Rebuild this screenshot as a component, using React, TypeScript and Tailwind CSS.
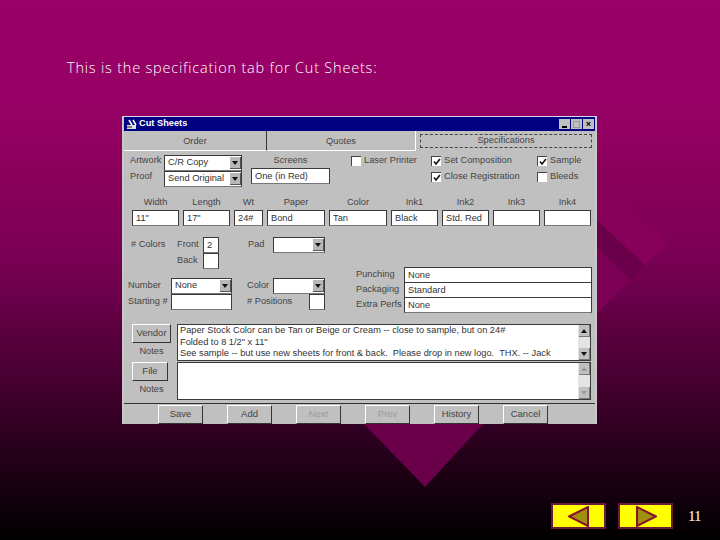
const FONT = "font-['Liberation_Sans',Arial,sans-serif]";

function Field({ className, value }: { className: string; value?: string }) {
  return (
    <div
      className={`h-[16px] shrink-0 overflow-hidden whitespace-nowrap border border-[#3a3a3a] border-b-[#777] bg-white pl-[3px] leading-[14px] text-[#333] ${className}`}
    >
      {value}
    </div>
  );
}

function Combo({ className, value }: { className: string; value?: string }) {
  return (
    <div className={`flex h-[16px] shrink-0 items-center border border-[#3a3a3a] border-b-[#777] bg-white ${className}`}>
      <span className="flex-1 overflow-hidden whitespace-nowrap pl-[3px] text-[#333]">{value}</span>
      <span className="flex h-[12px] w-[11px] items-center justify-center border-r border-b border-[#555] bg-[#b8b8b8]">
        <svg width="6" height="4" viewBox="0 0 6 4">
          <path d="M0 0h6L3 4z" fill="#111" />
        </svg>
      </span>
    </div>
  );
}

function Check({ checked, label, className }: { checked?: boolean; label: string; className: string }) {
  return (
    <div className={`flex items-center gap-[3px] ${className}`}>
      <span className="flex h-[10px] w-[10px] shrink-0 items-center justify-center border-t border-l border-[#444] bg-white">
        {checked && (
          <svg width="8" height="8" viewBox="0 0 8 8">
            <path d="M1 3.5l2 2.5 4-5" fill="none" stroke="#111" strokeWidth="1.6" />
          </svg>
        )}
      </span>
      <span className="whitespace-nowrap text-[#444]">{label}</span>
    </div>
  );
}

function Btn({ label, className, disabled }: { label: string; className: string; disabled?: boolean }) {
  return (
    <div
      className={`flex h-[19px] shrink-0 items-center justify-center border border-t-white border-l-white border-r-[#333] border-b-[#333] bg-[#c0c0c0] text-[9.5px] ${
        disabled ? "text-[#9a9a9a]" : "text-[#444]"
      } ${className}`}
    >
      {label}
    </div>
  );
}

function ScrollBtn({ up, dim }: { up?: boolean; dim?: boolean }) {
  return (
    <span className="flex h-[12px] w-[11px] items-center justify-center border-r border-b border-[#777] bg-[#c0c0c0]">
      <svg width="6" height="4" viewBox="0 0 6 4">
        <path d={up ? "M0 4h6L3 0z" : "M0 0h6L3 4z"} fill={dim ? "#999" : "#111"} />
      </svg>
    </span>
  );
}

function Memo({ lines, dim, className }: { lines?: string[]; dim?: boolean; className: string }) {
  return (
    <div className={`flex border border-[#3a3a3a] bg-white ${className}`}>
      <div className="flex-1 overflow-hidden whitespace-nowrap pl-[2px] leading-[11.5px] text-[#333]">
        {lines?.map((l) => (
          <div key={l} className="whitespace-pre">
            {l}
          </div>
        ))}
      </div>
      <div className="flex w-[12px] flex-col justify-between bg-[#e4e4e4] pl-px">
        <ScrollBtn up dim={dim} />
        <ScrollBtn dim={dim} />
      </div>
    </div>
  );
}

function Label({ children, className }: { children: string; className: string }) {
  return <span className={`shrink-0 whitespace-nowrap text-[#444] ${className}`}>{children}</span>;
}

const DIMS = [
  { label: "Width", value: '11"', w: "w-[47px]" },
  { label: "Length", value: '17"', w: "w-[47px]" },
  { label: "Wt", value: "24#", w: "w-[29px]" },
  { label: "Paper", value: "Bond", w: "w-[58px]" },
  { label: "Color", value: "Tan", w: "w-[58px]" },
  { label: "Ink1", value: "Black", w: "w-[47px]" },
  { label: "Ink2", value: "Std. Red", w: "w-[47px]" },
  { label: "Ink3", value: "", w: "w-[47px]" },
  { label: "Ink4", value: "", w: "w-[47px]" },
];

function CutSheets() {
  return (
    <div className={`ml-[122px] mt-[38px] flex h-[308px] w-[475px] flex-col border-[2px] border-t border-b border-t-[#d8d8e8] border-l-[#c8c8c8] border-r-[#c8c8c8] border-b-[#c0c0c0] bg-[#c0c0c0] text-[9.25px] ${FONT}`}>
      {/* title bar */}
      <div className="flex h-[14px] items-center bg-[#000080] pl-[2px] pr-[1px]">
        <svg width="12" height="11" viewBox="0 0 12 11">
          <path d="M1 6h9v4H1z" fill="#ddd" />
          <path d="M3 1l3 5M7 1l3 5" stroke="#fff" strokeWidth="1.5" />
          <path d="M1 8h5" stroke="#222" />
        </svg>
        <span className="ml-px flex-1 text-[9.25px] font-bold text-white">Cut Sheets</span>
        <div className="flex gap-px">
          <span className="flex h-[10px] w-[11px] items-end justify-center bg-[#c0c0c0] pb-px">
            <span className="h-[2px] w-[5px] bg-black" />
          </span>
          <span className="flex h-[10px] w-[11px] items-center justify-center bg-[#c0c0c0]">
            <span className="h-[7px] w-[7px] border border-[#999]" />
          </span>
          <span className="flex h-[10px] w-[11px] items-center justify-center bg-[#c0c0c0] text-[9px] font-bold leading-none text-black">
            ×
          </span>
        </div>
      </div>

      {/* tabs */}
      <div className="flex h-[20px] text-[#444]">
        <div className="flex w-[143px] items-center justify-center border-b border-r border-b-white border-r-[#333] pt-[2px]">Order</div>
        <div className="flex w-[149px] items-center justify-center border-b border-r border-white pt-[2px]">Quotes</div>
        <div className="flex flex-1 items-start pl-[4px] pr-[3px] pt-[3px]">
          <div className="flex h-[14px] w-full items-center justify-center border border-dashed border-[#444]">Specifications</div>
        </div>
      </div>

      {/* artwork, proof, screens, checks */}
      <div className="mt-[4px] flex pl-[6px]">
        <div className="flex flex-col">
          <div className="flex items-center">
            <Label className="w-[34px] -translate-y-[2px]">Artwork</Label>
            <Combo className="w-[78px]" value="C/R Copy" />
          </div>
          <div className="flex items-center">
            <Label className="w-[34px] -translate-y-[2px]">Proof</Label>
            <Combo className="w-[78px]" value="Send Original" />
          </div>
        </div>
        <div className="ml-[9px] flex w-[79px] flex-col items-center">
          <span className="-mt-px h-[14px] text-[#444]">Screens</span>
          <Field className="w-full" value="One (in Red)" />
        </div>
        <div className="-mt-[2px] ml-[21px] flex w-[80px] flex-col">
          <Check label="Laser Printer" className="h-[15px]" />
        </div>
        <div className="-mt-[2px] flex w-[106px] flex-col">
          <Check checked label="Set Composition" className="h-[16px]" />
          <Check checked label="Close Registration" className="h-[16px]" />
        </div>
        <div className="-mt-[2px] flex flex-col">
          <Check checked label="Sample" className="h-[16px]" />
          <Check label="Bleeds" className="h-[16px]" />
        </div>
      </div>

      {/* dimensions and inks */}
      <div className="mt-[8px] flex gap-[4px] pl-[8px]">
        {DIMS.map((d) => (
          <div key={d.label} className={`flex flex-col items-center ${d.w}`}>
            <span className="h-[15px] leading-[14px] text-[#444]">{d.label}</span>
            <Field className="w-full" value={d.value} />
          </div>
        ))}
      </div>

      {/* colors, pad */}
      <div className="mt-[11px] flex pl-[7px]">
        <Label className="mt-px w-[46px]">&#35; Colors</Label>
        <div className="flex flex-col">
          <div className="flex items-center">
            <Label className="w-[26px]">Front</Label>
            <Field className="w-[16px]" value="2" />
          </div>
          <div className="flex items-center">
            <Label className="w-[26px]">Back</Label>
            <Field className="w-[16px]" />
          </div>
        </div>
        <Label className="ml-[29px] mt-px w-[25px]">Pad</Label>
        <Combo className="w-[52px]" />
      </div>

      {/* number, color, punching */}
      <div className="-mt-[2px] flex pl-[4px]">
        <div className="mt-[11px] flex flex-col">
          <div className="flex items-center">
            <Label className="w-[43px]">Number</Label>
            <Combo className="w-[61px]" value="None" />
            <Label className="ml-[15px] w-[26px]">Color</Label>
            <Combo className="w-[52px]" />
          </div>
          <div className="flex items-center">
            <Label className="w-[43px]">Starting &#35;</Label>
            <Field className="w-[61px]" />
            <Label className="ml-[15px] w-[62px]">&#35; Positions</Label>
            <Field className="w-[16px]" />
          </div>
        </div>
        <div className="ml-[31px] flex flex-col">
          {[
            ["Punching", "None"],
            ["Packaging", "Standard"],
            ["Extra Perfs", "None"],
          ].map(([k, v]) => (
            <div key={k} className="flex h-[15px] items-center">
              <Label className="w-[48px]">{k}</Label>
              <Field className="w-[188px]" value={v} />
            </div>
          ))}
        </div>
      </div>

      {/* notes */}
      <div className="mt-[12px] flex flex-1 gap-[6px] pl-[8px] pr-[4px]">
        <div className="flex w-[39px] flex-col">
          <Btn label="Vendor" className="w-[39px]" />
          <span className="mt-[2px] h-[17px] text-center text-[#444]">Notes</span>
          <Btn label="File" className="w-[36px]" />
          <span className="mt-[2px] text-center text-[#444]">Notes</span>
        </div>
        <div className="flex flex-1 flex-col gap-px">
          <Memo
            className="h-[37px]"
            lines={[
              "Paper Stock Color can be Tan or Beige or Cream -- close to sample, but on 24#",
              'Folded to 8 1/2" x 11"',
              "See sample -- but use new sheets for front & back.  Please drop in new logo.  THX. -- Jack",
            ]}
          />
          <Memo className="h-[38px]" dim />
        </div>
      </div>

      {/* bottom buttons */}
      <div className="flex h-[20px] gap-[24px] border-t border-[#333] pl-[34px] pt-px">
        <Btn label="Save" className="w-[45px]" />
        <Btn label="Add" className="w-[45px]" />
        <Btn label="Next" className="w-[45px]" disabled />
        <Btn label="Prev" className="w-[45px]" disabled />
        <Btn label="History" className="w-[45px]" />
        <Btn label="Cancel" className="w-[45px]" />
      </div>
    </div>
  );
}

function NavArrow({ dir }: { dir: "left" | "right" }) {
  return (
    <div className="flex h-[26px] w-[55px] items-center justify-center border-[2px] border-[#6e1a3c] bg-[#ffff00]">
      <svg width="22" height="21" viewBox="0 0 22 21">
        <path
          d={dir === "left" ? "M1 10.5L20 1v19z" : "M21 10.5L2 1v19z"}
          fill="#a09010"
          stroke="#8a1030"
          strokeWidth="2"
        />
      </svg>
    </div>
  );
}

export default function App() {
  return (
    <div className="relative h-[540px] w-[720px] overflow-hidden bg-[linear-gradient(180deg,#9a0066_0%,#960064_20%,#880059_35%,#800058_44%,#6a004a_55%,#4e0036_67%,#230018_85%,#000000_100%)]">
      <svg className="absolute left-0 top-0" width="720" height="540" viewBox="0 0 720 540">
        <path d="M590 170L668 243L645 265L590 214z" fill="#870059" />
        <path d="M590 214L645 265L630 280L590 244z" fill="#6a004a" />
        <path d="M590 241L631 280L590 320z" fill="#7c0055" />
        <path d="M364 424H483L425 487z" fill="#690049" />
      </svg>
      <div className="relative">
        <p className="pl-[67px] pt-[58px] font-['Open_Sans',sans-serif] text-[14.5px] font-light leading-[20px] tracking-[0.8px] text-white">
          This is the specification tab for Cut Sheets:
        </p>
        <CutSheets />
        <div className="ml-[551px] mt-[79px] flex items-center">
          <NavArrow dir="left" />
          <div className="ml-[12px]">
            <NavArrow dir="right" />
          </div>
          <span className="ml-[15px] font-['Liberation_Serif',serif] text-[15px] tracking-[-1px] text-white">11</span>
        </div>
      </div>
    </div>
  );
}
